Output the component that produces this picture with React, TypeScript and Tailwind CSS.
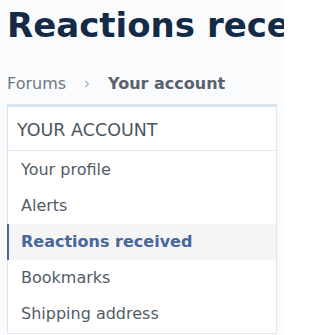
import { ChevronRight } from 'lucide-react';

const ITEMS = [
  { label: 'Your profile' },
  { label: 'Alerts' },
  { label: 'Reactions received', active: true },
  { label: 'Bookmarks' },
  { label: 'Shipping address' },
];

export default function App() {
  return (
    <div className="w-[284px] min-h-screen bg-[#fafbfc] px-[7px] font-['DejaVu_Sans',sans-serif] overflow-hidden">
      {/* Title */}
      <h1 className="pt-[5px] text-[34px] leading-[40px] font-bold text-[#142b48] whitespace-nowrap">
        Reactions received
      </h1>

      {/* Breadcrumb */}
      <div className="mt-[29px] flex items-center text-[16px] leading-[20px]">
        <span className="text-[#6e7883]">Forums</span>
        <ChevronRight size={12} strokeWidth={2} className="mx-[15px] text-[#6e7883]" />
        <span className="font-bold text-[#58626d]">Your account</span>
      </div>

      {/* Account panel */}
      <div className="mt-[10px] border-t-[3px] border-t-[#d7e3ef] border-x border-x-[#dee5ee] border-b border-b-[#dee5ee] bg-white">
        <div className="pl-[9px] pt-[12px] pb-[9px] text-[17.5px] leading-[22px] text-[#4c5661] uppercase border-b border-[#dee5ee]">
          Your account
        </div>
        <div className="py-px">
          {ITEMS.map((item) =>
            item.active ? (
              <div
                key={item.label}
                className="-ml-px border-l-2 border-[#4a6a9d] bg-[#f5f5f5] pl-[12px] text-[16px] leading-[36px] font-bold text-[#47679a]"
              >
                {item.label}
              </div>
            ) : (
              <div key={item.label} className="pl-[13px] text-[16px] leading-[36px] text-[#525c67]">
                {item.label}
              </div>
            )
          )}
        </div>
      </div>
    </div>
  );
}
